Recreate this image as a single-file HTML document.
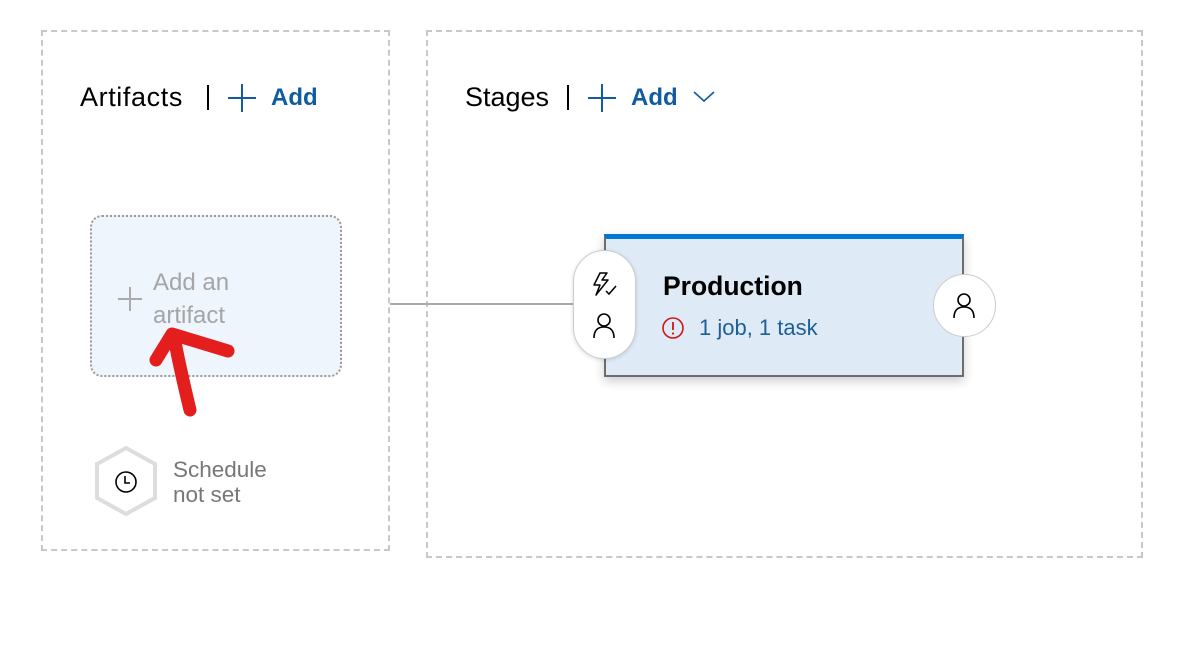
<!DOCTYPE html>
<html><head><meta charset="utf-8"><style>
body{margin:0;width:1196px;height:646px;background:#fff;font-family:"Liberation Sans",sans-serif;position:relative;overflow:hidden}
.a{position:absolute}
.box{position:absolute;border:2px dashed #c8c8c8;box-sizing:border-box}
.h{font-size:27px;color:#000;}
.add{font-size:24px;color:#0f5da0;font-weight:bold}
</style></head><body>
<div class="box" style="left:41px;top:30px;width:349px;height:521px"></div>
<div class="box" style="left:426px;top:30px;width:717px;height:528px"></div>

<div class="a h" style="left:80px;top:82px;letter-spacing:0.6px">Artifacts</div>
<div class="a" style="left:207px;top:85px;width:2px;height:25px;background:#000"></div>
<svg class="a" style="left:227px;top:83px" width="30" height="30"><path d="M15 1V29M1 15H29" stroke="#0f5da0" stroke-width="2"/></svg>
<div class="a add" style="left:271px;top:84px">Add</div>

<div class="a h" style="left:465px;top:82px">Stages</div>
<div class="a" style="left:567px;top:85px;width:2px;height:25px;background:#000"></div>
<svg class="a" style="left:587px;top:83px" width="30" height="30"><path d="M15 1V29M1 15H29" stroke="#0f5da0" stroke-width="2"/></svg>
<div class="a add" style="left:631px;top:84px">Add</div>
<svg class="a" style="left:692px;top:88px" width="24" height="16"><path d="M2 4L12 13L22 4" stroke="#0f5da0" stroke-width="1.6" fill="none"/></svg>

<div class="a" style="left:90px;top:215px;width:252px;height:162px;border:2px dotted #999;border-radius:12px;background:#eef5fc;box-sizing:border-box"></div>
<svg class="a" style="left:117px;top:286px" width="26" height="26"><path d="M13 1V25M1 13H25" stroke="#aaa" stroke-width="2"/></svg>
<div class="a" style="left:153px;top:266px;font-size:24px;line-height:33px;color:#a5a5a5">Add an<br>artifact</div>

<svg class="a" style="left:0;top:0" width="400" height="450"><path d="M190 410C184 385 178 360 174 336M156 360L172 334L228 351" stroke="#e41d1d" stroke-width="13" stroke-linecap="round" stroke-linejoin="round" fill="none"/></svg>

<svg class="a" style="left:94px;top:445px" width="64" height="72"><polygon points="32,3 61,19 61,53 32,69 3,53 3,19" fill="#fff" stroke="#ddd" stroke-width="4"/><circle cx="32" cy="37" r="10" fill="none" stroke="#000" stroke-width="1.6"/><path d="M31 31V38H36" stroke="#000" stroke-width="1.6" fill="none"/></svg>
<div class="a" style="left:173px;top:457px;font-size:22.5px;line-height:25px;color:#777">Schedule<br>not set</div>

<div class="a" style="left:390px;top:303px;width:184px;height:2px;background:#aaa"></div>

<div class="a" style="left:604px;top:234px;width:360px;height:143px;background:#deebf7;border-top:5px solid #0078d4;border-right:2px solid #6d6d6d;border-bottom:2px solid #6d6d6d;border-left:2px solid #6d6d6d;box-sizing:border-box;box-shadow:0 4px 10px rgba(0,0,0,.2)"></div>
<div class="a" style="left:573px;top:250px;width:63px;height:109px;border-radius:32px;background:#fff;border:1.5px solid #ccc;box-sizing:border-box;box-shadow:0 1px 4px rgba(0,0,0,.15)"></div>
<svg class="a" style="left:590px;top:270px" width="30" height="30"><path d="M10 3L4 15H10L6 25L18 10H12L17 3Z" fill="none" stroke="#000" stroke-width="1.5" stroke-linejoin="round"/><path d="M16 21L19 24L26 16" stroke="#000" stroke-width="1.5" fill="none"/></svg>
<svg class="a" style="left:590px;top:310px" width="30" height="30"><circle cx="14" cy="10" r="6" fill="none" stroke="#000" stroke-width="1.6"/><path d="M4 28C4 20 8 17 14 17C20 17 24 20 24 28" fill="none" stroke="#000" stroke-width="1.6"/></svg>
<div class="a" style="left:663px;top:271px;font-size:26.5px;font-weight:bold;color:#000">Production</div>
<svg class="a" style="left:661px;top:316px" width="24" height="24"><circle cx="12" cy="12" r="10" fill="none" stroke="#d21414" stroke-width="1.6"/><path d="M12 6V14" stroke="#d21414" stroke-width="1.8"/><circle cx="12" cy="17.5" r="1.1" fill="#d21414"/></svg>
<div class="a" style="left:699px;top:315px;font-size:22px;color:#1d5f96">1 job, 1 task</div>
<div class="a" style="left:933px;top:274px;width:63px;height:63px;border-radius:50%;background:#fff;border:1.5px solid #ccc;box-sizing:border-box"></div>
<svg class="a" style="left:950px;top:290px" width="30" height="30"><circle cx="14" cy="10" r="6" fill="none" stroke="#000" stroke-width="1.6"/><path d="M4 28C4 20 8 17 14 17C20 17 24 20 24 28" fill="none" stroke="#000" stroke-width="1.6"/></svg>
</body></html>
